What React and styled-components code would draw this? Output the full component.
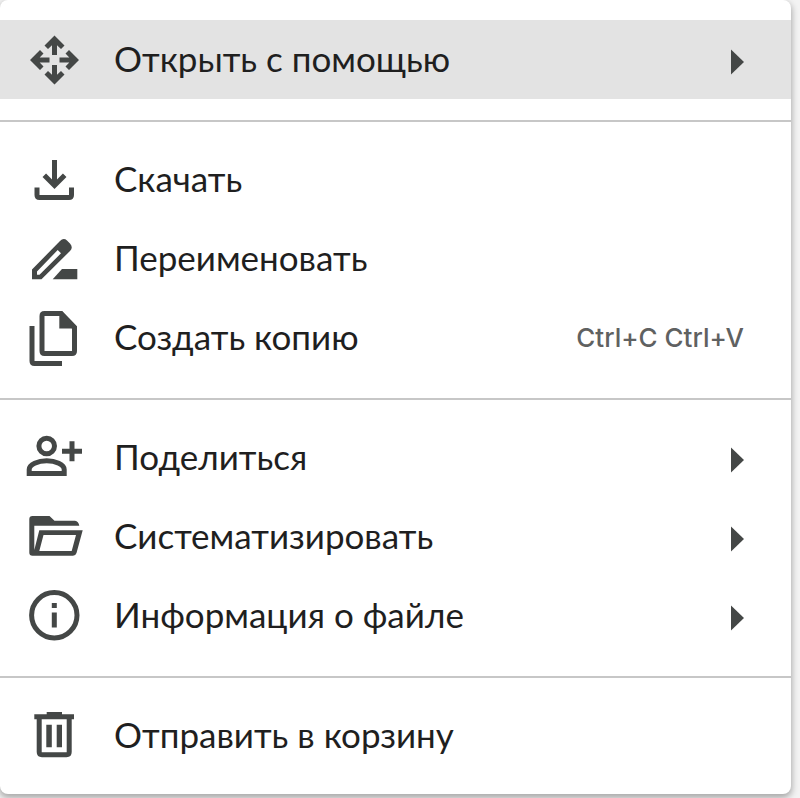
import React from "react";
import styled, {createGlobalStyle} from "styled-components";

const OpenWithIcon = () => (
    <Icon viewBox="0 0 60 59">
        {[0, 90, 180, 270].map((angle) => (
            <path
                key={angle}
                transform={`rotate(${angle} 30.5 30)`}
                d="M30.5 5.5L40.5 15.5L37 19L33 15.2V25H28V15.2L24 19L20.5 15.5Z"
            />
        ))}
    </Icon>
);

const DownloadIcon = () => (
    <Icon viewBox="0 0 60 59">
        <g className="line">
            <path d="M30.5 10V35M20.3 25.3L30.5 35.5L40.7 25.3"/>
            <path d="M13 37.5V45Q13 47.5 15.5 47.5H45Q47.5 47.5 47.5 45V37.5"/>
        </g>
    </Icon>
);

const RenameIcon = () => (
    <Icon viewBox="0 0 60 59">
        <path
            fillRule="evenodd"
            d="M8 50.3V40.5L36 12Q39.5 8.5 43 11.5L46 14.5Q49.5 18.5 46 22L17.5 50.3ZM13 45.7H15.5L37 24.3L33.7 21L13 42.5Z"
        />
        <path d="M28.7 50.3L38 40H53.3V50.3Z"/>
    </Icon>
);

const CopyIcon = () => (
    <Icon viewBox="0 0 60 59">
        <g className="line">
            <path d="M37 5.5H20.5Q18 5.5 18 8V43Q18 45.5 20.5 45.5H48Q50.5 45.5 50.5 43V19.5Z"/>
            <path d="M8 18V53Q8 55.5 10.5 55.5H38"/>
        </g>
        <path d="M35.3 3H38L53 18.5V20.5H35.3Z"/>
    </Icon>
);

const ShareIcon = () => (
    <Icon viewBox="0 0 60 59">
        <g className="line">
            <circle cx="22.7" cy="18" r="7.8"/>
            <path d="M5.2 45.5V41.5C5.2 36.5 14 32.8 22.7 32.8S40.2 36.5 40.2 41.5V45.5Z"/>
            <path d="M48 13.3V33.3M38 23.3H58"/>
        </g>
    </Icon>
);

const FolderIcon = () => (
    <Icon viewBox="0 0 60 59">
        <path
            fillRule="evenodd"
            d="M8.5 9H25.5L30.5 13.7H51Q54.5 14 55.3 18.7H10.3V43L15.3 23.3H58.7L52.5 46Q51.7 48.7 49 48.7H8.5Q5.3 48.7 5.3 45.5V12.2Q5.3 9 8.5 9ZM19.5 28L15.3 44H47.7L52 28Z"
        />
    </Icon>
);

const InfoIcon = () => (
    <Icon viewBox="0 0 60 59">
        <g className="line">
            <circle cx="30.3" cy="29.3" r="22.7"/>
        </g>
        <path d="M27.8 17H32.8V22H27.8ZM27.8 26.5H32.8V41.5H27.8Z"/>
    </Icon>
);

const TrashIcon = () => (
    <Icon viewBox="0 0 60 59">
        <path d="M22.7 6H38V8.3H50V13.3H10.3V8.3H22.7ZM22.3 18.7H27.8V41.3H22.3ZM32.7 18.7H38V41.3H32.7Z"/>
        <g className="line">
            <path d="M15.2 12V46Q15.2 48.7 18 48.7H42.5Q45.2 48.7 45.2 46V12"/>
        </g>
    </Icon>
);

const groups = [
    [{title: "Открыть с помощью", icon: OpenWithIcon, submenu: true, active: true}],
    [
        {title: "Скачать", icon: DownloadIcon},
        {title: "Переименовать", icon: RenameIcon},
        {title: "Создать копию", icon: CopyIcon, shortcut: "Ctrl+C Ctrl+V"},
    ],
    [
        {title: "Поделиться", icon: ShareIcon, submenu: true},
        {title: "Систематизировать", icon: FolderIcon, submenu: true},
        {title: "Информация о файле", icon: InfoIcon, submenu: true},
    ],
    [{title: "Отправить в корзину", icon: TrashIcon}],
];

const App = () => {
    return (
        <Page>
            <GlobalStyle/>
            <Menu role="menu">
                {groups.map((items) => (
                    <Group role="group" key={items[0].title}>
                        {items.map(({title, icon: ItemIcon, submenu, shortcut, active}) => (
                            <Item
                                key={title}
                                type="button"
                                role="menuitem"
                                aria-haspopup={submenu ? "menu" : undefined}
                                $active={active}
                            >
                                <ItemIcon/>
                                <Title>{title}</Title>
                                {shortcut && <Shortcut>{shortcut}</Shortcut>}
                                {submenu && (
                                    <Arrow viewBox="0 0 13 59">
                                        <path d="M0 19.5L13 32L0 44.5Z"/>
                                    </Arrow>
                                )}
                            </Item>
                        ))}
                    </Group>
                ))}
            </Menu>
        </Page>
    );
};

export default App;

const GlobalStyle = createGlobalStyle`
  body {
    margin: 0;
    background-color: #f3f3f3;
    font-family: Lato, "Noto Sans", sans-serif;
  }
`;

const Page = styled.main`
  padding: 0 9px 4px 0;
`;

const Menu = styled.div`
  padding: 20px 0 19px;
  border-radius: 8px;
  background-color: #fff;
  box-shadow: 0 3px 6px 1px rgba(0, 0, 0, .3);
`;

const Group = styled.div`
  & + & {
    margin-top: 21px;
    padding-top: 18px;
    border-top: 2px solid #c7c7c7;
  }
`;

const Item = styled.button`
  display: flex;
  align-items: center;
  width: 100%;
  height: 79px;
  padding: 0 47px 0 24px;
  border: none;
  background-color: ${({$active}) => ($active ? "#e3e3e3" : "transparent")};
  color: #1f1f1f;
  font-family: inherit;
  font-size: 35px;
  line-height: 48px;
  text-align: left;
  cursor: pointer;

  &:hover {
    background-color: #e3e3e3;
  }
`;

const Icon = styled.svg`
  flex: none;
  width: 60px;
  height: 59px;
  margin-right: 30px;
  fill: #444746;

  .line {
    fill: none;
    stroke: #444746;
    stroke-width: 5px;
  }
`;

const Title = styled.span`
  flex: 1;
  padding-bottom: 4px;
  white-space: nowrap;
`;

const Shortcut = styled.span`
  color: #5f6161;
  font-family: Inter, sans-serif;
  font-size: 26px;
  font-weight: 500;
  white-space: nowrap;
`;

const Arrow = styled.svg`
  flex: none;
  width: 13px;
  height: 59px;
  fill: #444746;
`;
